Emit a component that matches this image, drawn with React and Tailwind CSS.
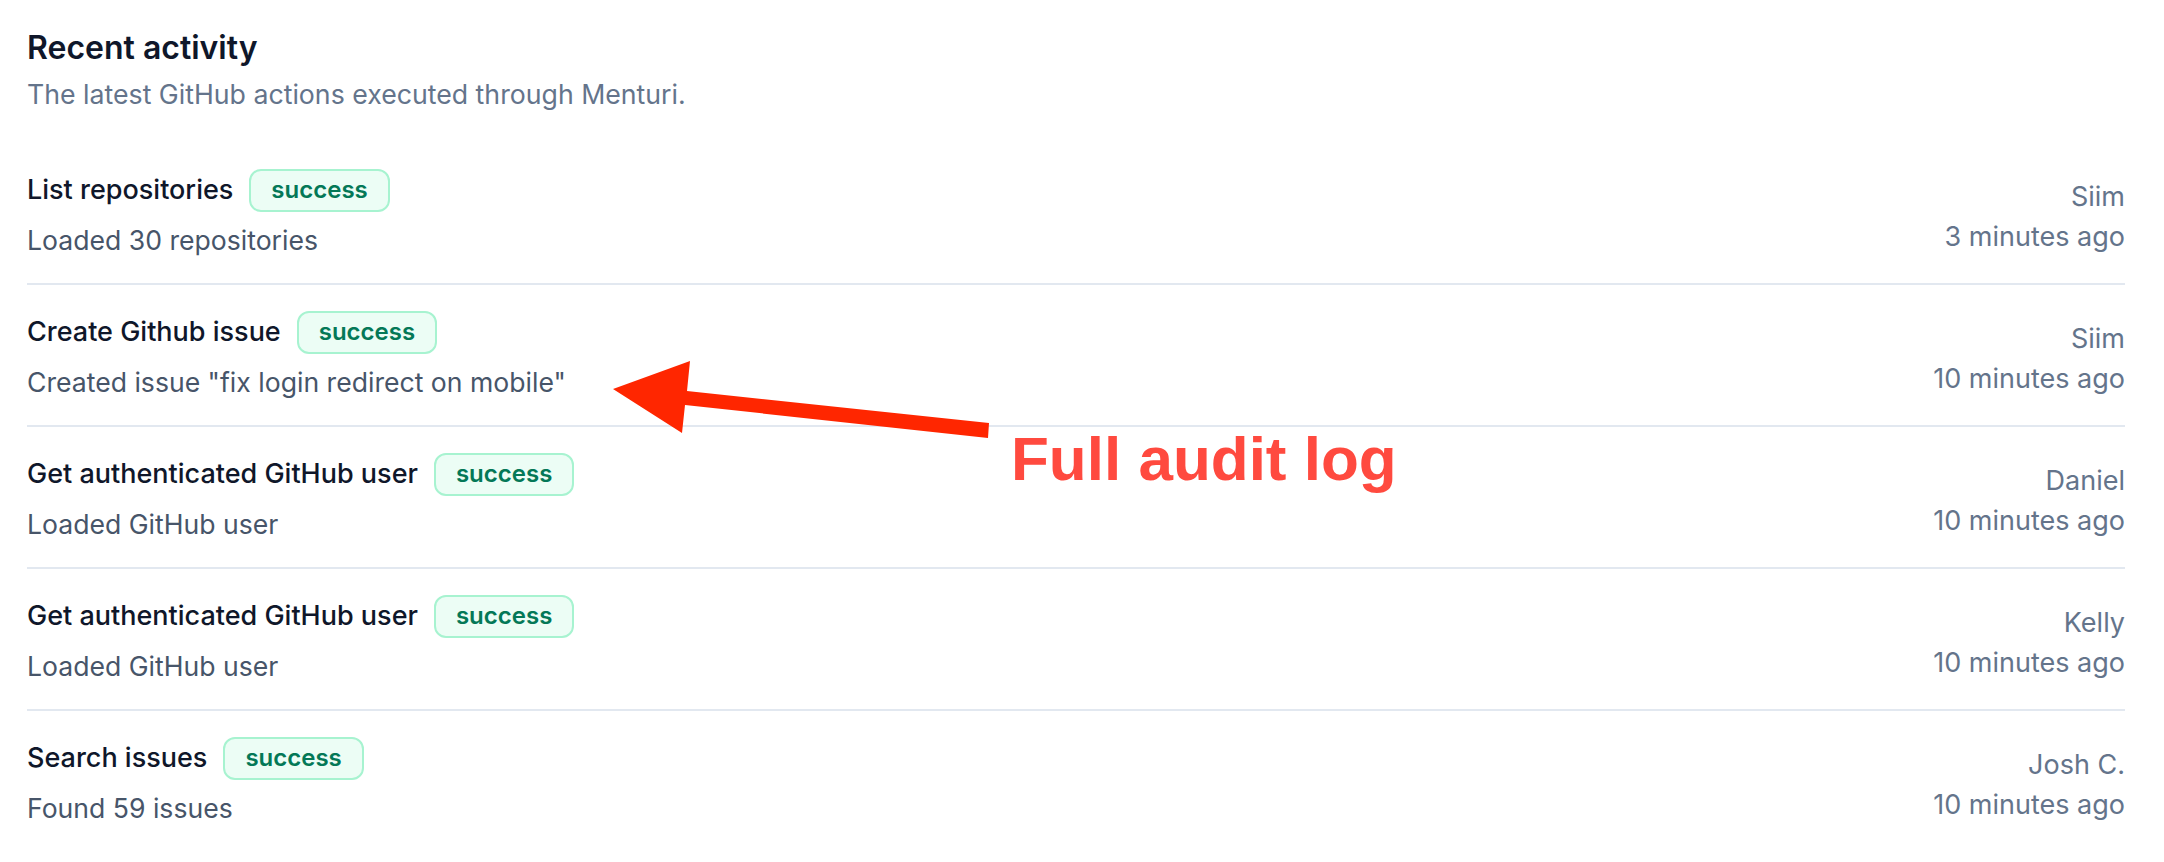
import React from 'react';

const activity = [
  { id: 1, action: 'List repositories', detail: 'Loaded 30 repositories', user: 'Siim', time: '3 minutes ago' },
  { id: 2, action: 'Create Github issue', detail: 'Created issue "fix login redirect on mobile"', user: 'Siim', time: '10 minutes ago' },
  { id: 3, action: 'Get authenticated GitHub user', detail: 'Loaded GitHub user', user: 'Daniel', time: '10 minutes ago' },
  { id: 4, action: 'Get authenticated GitHub user', detail: 'Loaded GitHub user', user: 'Kelly', time: '10 minutes ago' },
  { id: 5, action: 'Search issues', detail: 'Found 59 issues', user: 'Josh C.', time: '10 minutes ago' },
];

function StatusBadge({ status }) {
  return (
    <span className="inline-flex items-center h-[43px] px-[20px] rounded-[12px] border-2 border-[#a7f3d0] bg-[#ecfdf5] text-[#047857] text-[24px] font-semibold">
      {status}
    </span>
  );
}

export default function App() {
  return (
    <div className="relative min-h-screen bg-white font-['Inter','Noto_Sans',sans-serif] overflow-hidden">
      <div className="w-[2125px] pl-[27px] pt-[28px]">
        {/* Header */}
        <div className="mb-[31px]">
          <h2 className="text-[32px] leading-[40px] font-semibold text-[#0f172a]">Recent activity</h2>
          <p className="mt-[8px] text-[26.7px] leading-[36px] text-[#64748b]">
            The latest GitHub actions executed through Menturi.
          </p>
        </div>

        {/* List */}
        <ul className="divide-y-2 divide-[#e2e8f0]">
          {activity.map((item) => (
            <li key={item.id} className="flex items-center justify-between pt-[25px] pb-[25px]">
              <div>
                <div className="flex items-center gap-[16px] h-[44px]">
                  <span className="text-[27px] leading-[44px] font-medium text-[#0f172a]">{item.action}</span>
                  <StatusBadge status="success" />
                </div>
                <p className="mt-[10px] text-[26.6px] leading-[36px] text-[#475569]">{item.detail}</p>
              </div>
              <div className="mt-[8px] text-right text-[27px] leading-[40px] text-[#64748b]">
                <p>{item.user}</p>
                <p>{item.time}</p>
              </div>
            </li>
          ))}
        </ul>
      </div>

      {/* Annotation */}
      <svg className="absolute left-0 top-0 pointer-events-none" width="2164" height="862">
        <polygon
          points="613,389 690,361 687,391 989,423 988,438 685,405 682,433"
          fill="#ff2600"
        />
      </svg>
      <div className="absolute left-[1011px] top-[423px] text-[62px] leading-[72px] font-bold text-[#ff4a3f] font-['Liberation_Sans',Arial,sans-serif] pointer-events-none">
        Full audit log
      </div>
    </div>
  );
}
